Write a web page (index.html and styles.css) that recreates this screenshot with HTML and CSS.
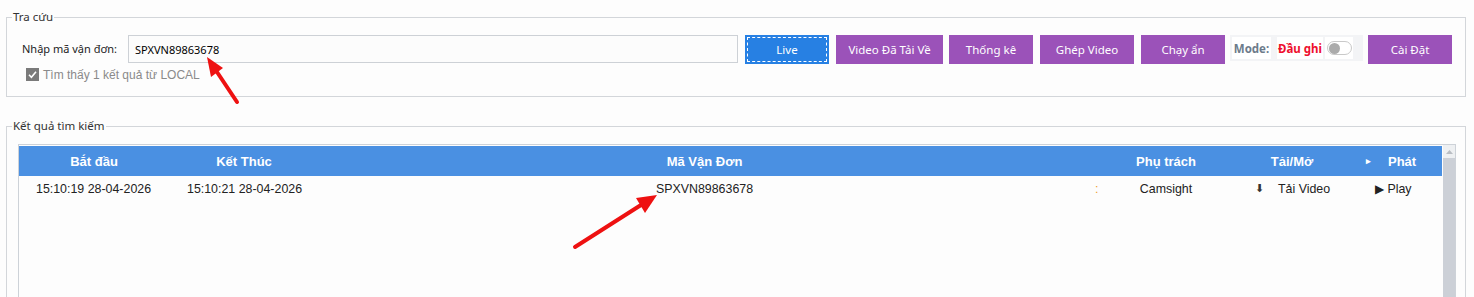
FILE: index.html
```html
<!DOCTYPE html>
<html lang="vi">
<head>
<meta charset="utf-8">
<title>Tra cứu</title>
<link rel="stylesheet" href="styles.css">
</head>
<body>
<fieldset class="box search">
  <legend>Tra cứu</legend>
  <div class="row">
    <label class="lbl" for="code">Nhập mã vận đơn:</label>
    <input id="code" class="code" type="text" value="SPXVN89863678">
    <button class="btn live">Live</button>
    <button class="btn purple w107">Video Đã Tải Về</button>
    <button class="btn purple tk">Thống kê</button>
    <button class="btn purple w94">Ghép Video</button>
    <button class="btn purple">Chạy ẩn</button>
    <div class="mode">
      <span class="mode-lbl">Mode:</span>
      <span class="mode-val">Đầu ghi</span>
      <span class="mode-tg"><span class="pill"><span class="knob"></span></span></span>
    </div>
    <button class="btn purple cfg">Cài Đặt</button>
  </div>
  <div class="found">
    <span class="chk"><svg width="13" height="13" viewBox="0 0 13 13"><rect width="13" height="13" fill="#7a7a7a"/><path d="M3 6.8 L5.4 9.2 L10 3.8" stroke="#fff" stroke-width="1.6" fill="none"/></svg></span>
    <span class="found-txt">Tìm thấy 1 kết quả từ LOCAL</span>
  </div>
</fieldset>

<fieldset class="box results">
  <legend>Kết quả tìm kiếm</legend>
  <div class="grid">
    <div class="table">
      <div class="thead">
        <div class="c c1 h">Bắt đầu</div>
        <div class="c c2 h">Kết Thúc</div>
        <div class="c c3 h">Mã Vận Đơn</div>
        <div class="c c4 h"></div>
        <div class="c c5 h">Phụ trách</div>
        <div class="c c6 h">Tải/Mở</div>
        <div class="c c7 h"><span class="tri">▸</span><span>Phát</span></div>
      </div>
      <div class="trow">
        <div class="c c1 l1">15:10:19 28-04-2026</div>
        <div class="c c2 l2">15:10:21 28-04-2026</div>
        <div class="c c3">SPXVN89863678</div>
        <div class="c c4 colon">:</div>
        <div class="c c5">Camsight</div>
        <div class="c c6 dl"><span class="down">&#x2B07;</span><span>Tải Video</span></div>
        <div class="c c7 play">▶ Play</div>
      </div>
    </div>
    <div class="vscroll"><div class="up"><svg width="7" height="4" viewBox="0 0 7 4"><path d="M0 4 L3.5 0 L7 4Z" fill="#b9bdc3"/></svg></div></div>
  </div>
</fieldset>

<svg class="marks" width="1474" height="297" viewBox="0 0 1474 297">
  <line x1="237" y1="102" x2="217" y2="72" stroke="#ee1111" stroke-width="4" stroke-linecap="round"/>
  <polygon points="207,57 223,68 211,77" fill="#ee1111"/>
  <line x1="575" y1="247" x2="641" y2="205" stroke="#ee1111" stroke-width="4" stroke-linecap="round"/>
  <polygon points="657,195 645,213 636,198" fill="#ee1111"/>
</svg>
</body>
</html>
```

FILE: styles.css
```css
html, body {
  margin: 0;
  padding: 0;
  background: #fdfdfd;
  width: 1474px;
  height: 297px;
  overflow: hidden;
  position: relative;
}
body {
  font-family: "Noto Sans", "Liberation Sans", sans-serif;
  font-size: 11.5px;
  color: #222;
}
.box {
  border: 1px solid #d3d6da;
  margin: 0 8px 0 6px;
  padding: 0;
  min-width: 0;
}
.box legend {
  padding: 0 1px;
  font-size: 11.5px;
  line-height: 16px;
  color: #333;
}
.search legend { margin-left: -10px; }
.results legend { margin-left: -6px; }
.search {
  margin-top: 9px;
  height: 76px;
  padding: 10px 0 0 15px;
}
.row {
  display: flex;
  align-items: flex-start;
  gap: 7px;
  height: 29px;
}
.lbl {
  flex: none;
  white-space: nowrap;
  line-height: 28px;
  width: 99px;
  font-size: 11px;
  color: #222;
}
.code {
  flex: none;
  box-sizing: border-box;
  width: 610px;
  height: 28px;
  border: 1px solid #cdd1d6;
  background: #fcfcfc;
  margin: 0;
  padding: 0 6px;
  font-family: "Noto Sans", sans-serif;
  font-size: 11px;
  color: #000;
  outline: none;
}
.btn {
  flex: none;
  box-sizing: border-box;
  width: 84px;
  height: 29px;
  border: 0;
  margin: 0;
  padding: 0;
  color: #fff;
  font-family: "Noto Sans", sans-serif;
  font-size: 11.5px;
}
.live {
  background: #2780e3;
  outline: 1px dashed #fff;
  outline-offset: -3px;
}
.purple { background: #9b52b9; }
.w107 { width: 107px; }
.w94 { width: 94px; }
.tk { margin-left: -1px; }
.mode {
  flex: none;
  box-sizing: border-box;
  margin-left: -2px;
  width: 133px;
  height: 26px;
  background: #f3f4f6;
  display: flex;
  align-items: center;
  gap: 6px;
  padding: 0 2px;
}
.mode > span {
  background: #fff;
  height: 22px;
  display: flex;
  align-items: center;
}
.mode-lbl {
  width: 39px;
  justify-content: center;
  font-weight: bold;
  color: #6c7b8b;
}
.mode-val {
  width: 46px;
  justify-content: center;
  font-weight: bold;
  color: #ee0f2e;
}
.mode-tg {
  margin-left: -4px;
  width: 28px;
  justify-content: center;
}
.pill {
  box-sizing: border-box;
  width: 25px;
  height: 14px;
  border: 1px solid #c9c9c9;
  border-radius: 7px;
  background: #fff;
  display: flex;
  align-items: center;
  padding-left: 1px;
}
.knob {
  width: 11px;
  height: 11px;
  border-radius: 50%;
  background: #ababab;
}
.cfg { margin-left: -2px; }
.found {
  display: flex;
  align-items: center;
  gap: 4px;
  margin-top: 4px;
  margin-left: 4px;
  height: 13px;
}
.chk { display: flex; }
.found-txt {
  font-family: "Liberation Sans", Arial, sans-serif;
  font-size: 12px;
  color: #8a8a8a;
}
.results {
  margin-top: 21px;
  height: 300px;
  padding: 10px 0 0 11px;
}
.grid {
  width: 1436px;
  height: 300px;
  border: 1px solid #cdd2d8;
  display: flex;
  background: #fdfdfd;
}
.table {
  flex: 1;
  padding: 1px 0 0 0;
  font-family: "Liberation Sans", Arial, sans-serif;
  font-size: 12.4px;
}
.thead, .trow {
  display: grid;
  grid-template-columns: 150px 150px 771px 16px 120px 132px 84px;
}
.thead {
  background: #4a90e2;
  height: 30px;
}
.trow { height: 25px; }
.c {
  display: flex;
  align-items: center;
  justify-content: center;
  white-space: nowrap;
  color: #222;
}
.h {
  color: #fff;
  font-weight: bold;
  font-size: 13px;
}
.l1 { justify-content: flex-start; padding-left: 17px; }
.l2 { justify-content: flex-start; padding-left: 18px; }
.colon { justify-content: flex-start; padding-left: 5px; color: #f0a030; }
.c7.h { justify-content: flex-start; padding-left: 8px; }
.c7.h .tri { font-size: 9px; margin-right: 17px; }
.dl { justify-content: flex-start; padding-left: 29px; gap: 14px; }
.down { font-size: 11px; color: #333; }
.play { justify-content: flex-start; padding-left: 17px; }
.vscroll {
  width: 12px;
  background: #ccd0d7;
  margin-left: 1px;
}
.up {
  height: 13px;
  background: #eef0f2;
  display: flex;
  align-items: center;
  justify-content: center;
}
.marks {
  position: absolute;
  left: 0;
  top: 0;
  pointer-events: none;
}
```
